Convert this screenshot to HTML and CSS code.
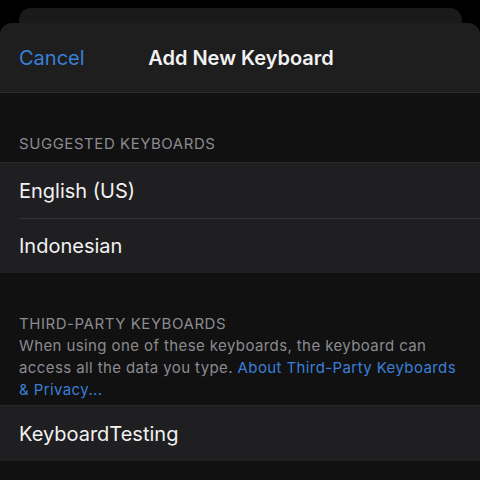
FILE: index.html
```html
<!DOCTYPE html>
<html>
<head>
<meta charset="utf-8">
<link rel="stylesheet" href="styles.css">
</head>
<body>
<div class="back-card"></div>
<div class="sheet">
  <div class="nav">
    <span class="cancel">Cancel</span>
    <span class="title">Add New Keyboard</span>
  </div>
  <div class="content">
    <div class="caption first">SUGGESTED KEYBOARDS</div>
    <div class="group">
      <div class="row"><span>English (US)</span></div>
      <div class="row"><span>Indonesian</span></div>
    </div>
    <div class="caption second">THIRD-PARTY KEYBOARDS</div>
    <div class="footnote">When using one of these keyboards, the keyboard can access all the data you type. <span class="link">About Third-Party Keyboards &amp; Privacy...</span></div>
    <div class="group">
      <div class="row"><span>KeyboardTesting</span></div>
    </div>
  </div>
</div>
</body>
</html>
```
FILE: styles.css
```css
html, body {
  margin: 0;
  padding: 0;
  background: #000;
  height: 480px;
  overflow: hidden;
  font-family: Inter, "Liberation Sans", sans-serif;
}
.back-card {
  margin: 8px 18px 0 19px;
  height: 15px;
  background: #1a1a1a;
  border-radius: 12px 12px 0 0;
}
.sheet {
  background: #111112;
  border-radius: 12px 12px 0 0;
  overflow: hidden;
  height: 457px;
}
.nav {
  height: 69px;
  background: #1e1e1f;
  border-bottom: 1px solid #2c2c2e;
  position: relative;
  display: flex;
  align-items: center;
  justify-content: center;
}
.cancel {
  position: absolute;
  left: 19px;
  top: 22px;
  color: #3a7fd6;
  font-size: 20px;
  line-height: 26px;
}
.title {
  color: #f2f2f2;
  font-size: 20px;
  font-weight: 600;
  line-height: 26px;
  margin-left: 2px;
}
.caption {
  color: #8b8b90;
  font-size: 15px;
  line-height: 22px;
  letter-spacing: 0.55px;
  padding: 0 19px;
}
.caption.first {
  padding-top: 40px;
  padding-bottom: 7px;
}
.caption.second {
  padding-top: 40px;
}
.footnote {
  color: #8b8b90;
  font-size: 15px;
  line-height: 22px;
  letter-spacing: 0.4px;
  padding: 0 20px 4px 19px;
}
.link {
  color: #3a7fd6;
}
.group {
  background: #1f1f21;
  border-top: 1px solid #262628;
}
.row {
  height: 55px;
  display: flex;
  align-items: center;
  margin-left: 19px;
  color: #f2f2f2;
  font-size: 20px;
}
.row + .row {
  border-top: 1px solid #333336;
  height: 54px;
}
```
